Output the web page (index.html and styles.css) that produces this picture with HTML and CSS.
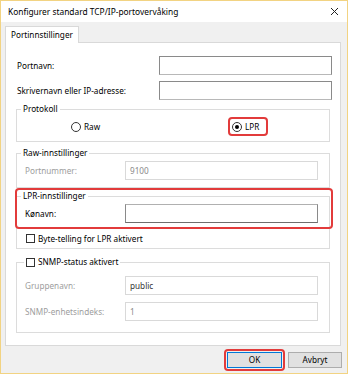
FILE: index.html
```html
<!DOCTYPE html>
<html lang="no">
<head>
  <meta charset="UTF-8">
  <title>Konfigurer standard TCP/IP-portovervåking</title>
  <link rel="stylesheet" href="styles.css">
</head>
<body>

<div class="window">
  <div class="titlebar">
    <span class="title">Konfigurer standard TCP/IP-portovervåking</span>
    <svg class="close" width="9" height="9" viewBox="0 0 9 9">
      <path d="M1 1 L8 8 M8 1 L1 8" stroke="#222" stroke-width="1" fill="none"/>
    </svg>
  </div>

  <div class="tabs">
    <div class="tab">Portinnstillinger</div>
  </div>

  <div class="panel">
    <div class="row top-row">
      <label class="label">Portnavn:</label>
      <div class="input"></div>
    </div>
    <div class="row">
      <label class="label">Skrivernavn eller IP-adresse:</label>
      <div class="input"></div>
    </div>

    <!-- Protokoll -->
    <fieldset class="group proto">
      <legend>Protokoll</legend>
      <div class="radios">
        <div class="radio-cell">
          <span class="radio"></span><span>Raw</span>
        </div>
        <div class="radio-cell">
          <span class="mark">
            <span class="radio checked"></span><span>LPR</span>
          </span>
        </div>
      </div>
    </fieldset>

    <!-- Raw -->
    <fieldset class="group raw">
      <legend>Raw-innstillinger</legend>
      <div class="field">
        <span class="flabel disabled">Portnummer:</span>
        <div class="finput off">9100</div>
      </div>
    </fieldset>

    <!-- LPR -->
    <fieldset class="group lpr">
      <legend>LPR-innstillinger</legend>
      <div class="field">
        <span class="flabel">Kønavn:</span>
        <div class="finput"></div>
      </div>
      <div class="check-row">
        <span class="check"></span><span>Byte-telling for LPR aktivert</span>
      </div>
      <div class="highlight"></div>
    </fieldset>

    <!-- SNMP -->
    <fieldset class="group snmp">
      <legend class="check-legend"><span class="check"></span><span>SNMP-status aktivert</span></legend>
      <div class="field">
        <span class="flabel disabled">Gruppenavn:</span>
        <div class="finput off dark">public</div>
      </div>
      <div class="field">
        <span class="flabel disabled">SNMP-enhetsindeks:</span>
        <div class="finput off">1</div>
      </div>
    </fieldset>
  </div>

  <div class="buttons">
    <span class="mark btn-mark"><button class="btn default">OK</button></span>
    <button class="btn">Avbryt</button>
  </div>
</div>

</body>
</html>
```

FILE: styles.css
```css
body {
  margin: 0;
  font-family: 'Noto Sans', 'Liberation Sans', sans-serif;
  font-size: 8.2px;
  color: #000;
}

.window {
  width: 348px;
  height: 374px;
  box-sizing: border-box;
  border: 1px solid #f2d382;
  background: #f0f0f0;
}

.titlebar {
  height: 21px;
  background: #fff;
  display: flex;
  align-items: center;
  justify-content: space-between;
  padding: 0 8px 0 7px;
}

.title {
  font-size: 8.4px;
}

.close {
  display: block;
}

.tabs {
  display: flex;
  padding: 4px 0 0 4px;
}

.tab {
  height: 17px;
  box-sizing: border-box;
  padding: 0 5px;
  line-height: 15px;
  background: #fff;
  border: 1px solid #d9d9d9;
  border-bottom: none;
  margin-bottom: -1px;
  position: relative;
}

.panel {
  margin: 0 6px 0 4px;
  height: 304px;
  box-sizing: border-box;
  background: #fff;
  border: 1px solid #d9d9d9;
}

.row {
  display: flex;
  align-items: center;
  padding: 0 8px 0 11px;
  margin-top: 6px;
}

.row.top-row {
  margin-top: 13px;
}

.label {
  flex: 1;
}

.input {
  width: 173px;
  height: 19px;
  box-sizing: border-box;
  border: 1px solid #8a8a8a;
  border-bottom-color: #b8b8b8;
  background: #fff;
}

.group {
  margin: 0 10px;
  padding: 0 8px;
  border: 1px solid #dcdcdc;
  box-sizing: border-box;
  min-width: 0;
  position: relative;
}

.group legend {
  padding: 0 2px;
  margin-left: -4px;
  line-height: 14px;
}

.proto {
  margin-top: 2px;
  height: 40px;
}

.raw {
  margin-top: 4px;
  height: 42px;
}

.lpr {
  margin-top: 1px;
  height: 60px;
}

.snmp {
  margin-top: 6px;
  height: 78px;
}

.radios {
  display: flex;
  margin-top: 1px;
  padding-left: 46px;
}

.radio-cell {
  width: 157px;
  flex-shrink: 0;
  display: flex;
  align-items: center;
  gap: 3px;
  height: 19px;
}

.radio-cell + .radio-cell {
  width: auto;
}

.mark {
  display: inline-flex;
  align-items: center;
  gap: 3px;
  border: 2px solid #e23b3b;
  border-radius: 4px;
  padding: 0 7px 0 2px;
  height: 19px;
  box-sizing: border-box;
}

.radio {
  width: 10px;
  height: 10px;
  box-sizing: border-box;
  border: 1px solid #333;
  border-radius: 50%;
  background: #fff;
  display: inline-flex;
  align-items: center;
  justify-content: center;
}

.radio.checked::after {
  content: "";
  width: 4px;
  height: 4px;
  border-radius: 50%;
  background: #000;
}

.field {
  display: flex;
  align-items: center;
  margin-top: 1px;
}

.snmp .field {
  margin-top: 7px;
}

.flabel {
  width: 100px;
}

.disabled {
  color: #9d9d9d;
}

.finput {
  width: 193px;
  height: 19px;
  box-sizing: border-box;
  border: 1px solid #8a8a8a;
  border-bottom-color: #6e6e6e;
  border-top-color: #b0b0b0;
  padding: 0 4px;
  line-height: 17px;
}

.finput.off {
  border-color: #d9d9d9;
  color: #8a8a8a;
}

.finput.dark {
  color: #333;
}

.check-row {
  display: flex;
  align-items: center;
  gap: 3px;
  margin-top: 10px;
  margin-left: 1px;
}

.check {
  width: 9px;
  height: 9px;
  box-sizing: border-box;
  border: 1px solid #333;
  background: #fff;
  display: inline-block;
}

.check-legend {
  display: flex;
  align-items: center;
  gap: 3px;
}

.group legend.check-legend {
  margin-left: -1px;
}

.highlight {
  position: absolute;
  left: -2px;
  top: -15px;
  width: 318px;
  height: 41px;
  box-sizing: border-box;
  border: 2px solid #e23b3b;
  border-radius: 4px;
}

.buttons {
  display: flex;
  justify-content: flex-end;
  align-items: center;
  gap: 3px;
  padding: 3px 5px 0 0;
}

.btn {
  font: inherit;
  height: 16px;
  box-sizing: border-box;
  background: #e1e1e1;
  border: 1px solid #adadad;
  padding: 0;
  width: 54px;
  line-height: 14px;
  color: #000;
}

.btn.default {
  border-color: #0078d7;
  width: 55px;
}

.btn-mark {
  padding: 1px;
  height: 22px;
}
```
